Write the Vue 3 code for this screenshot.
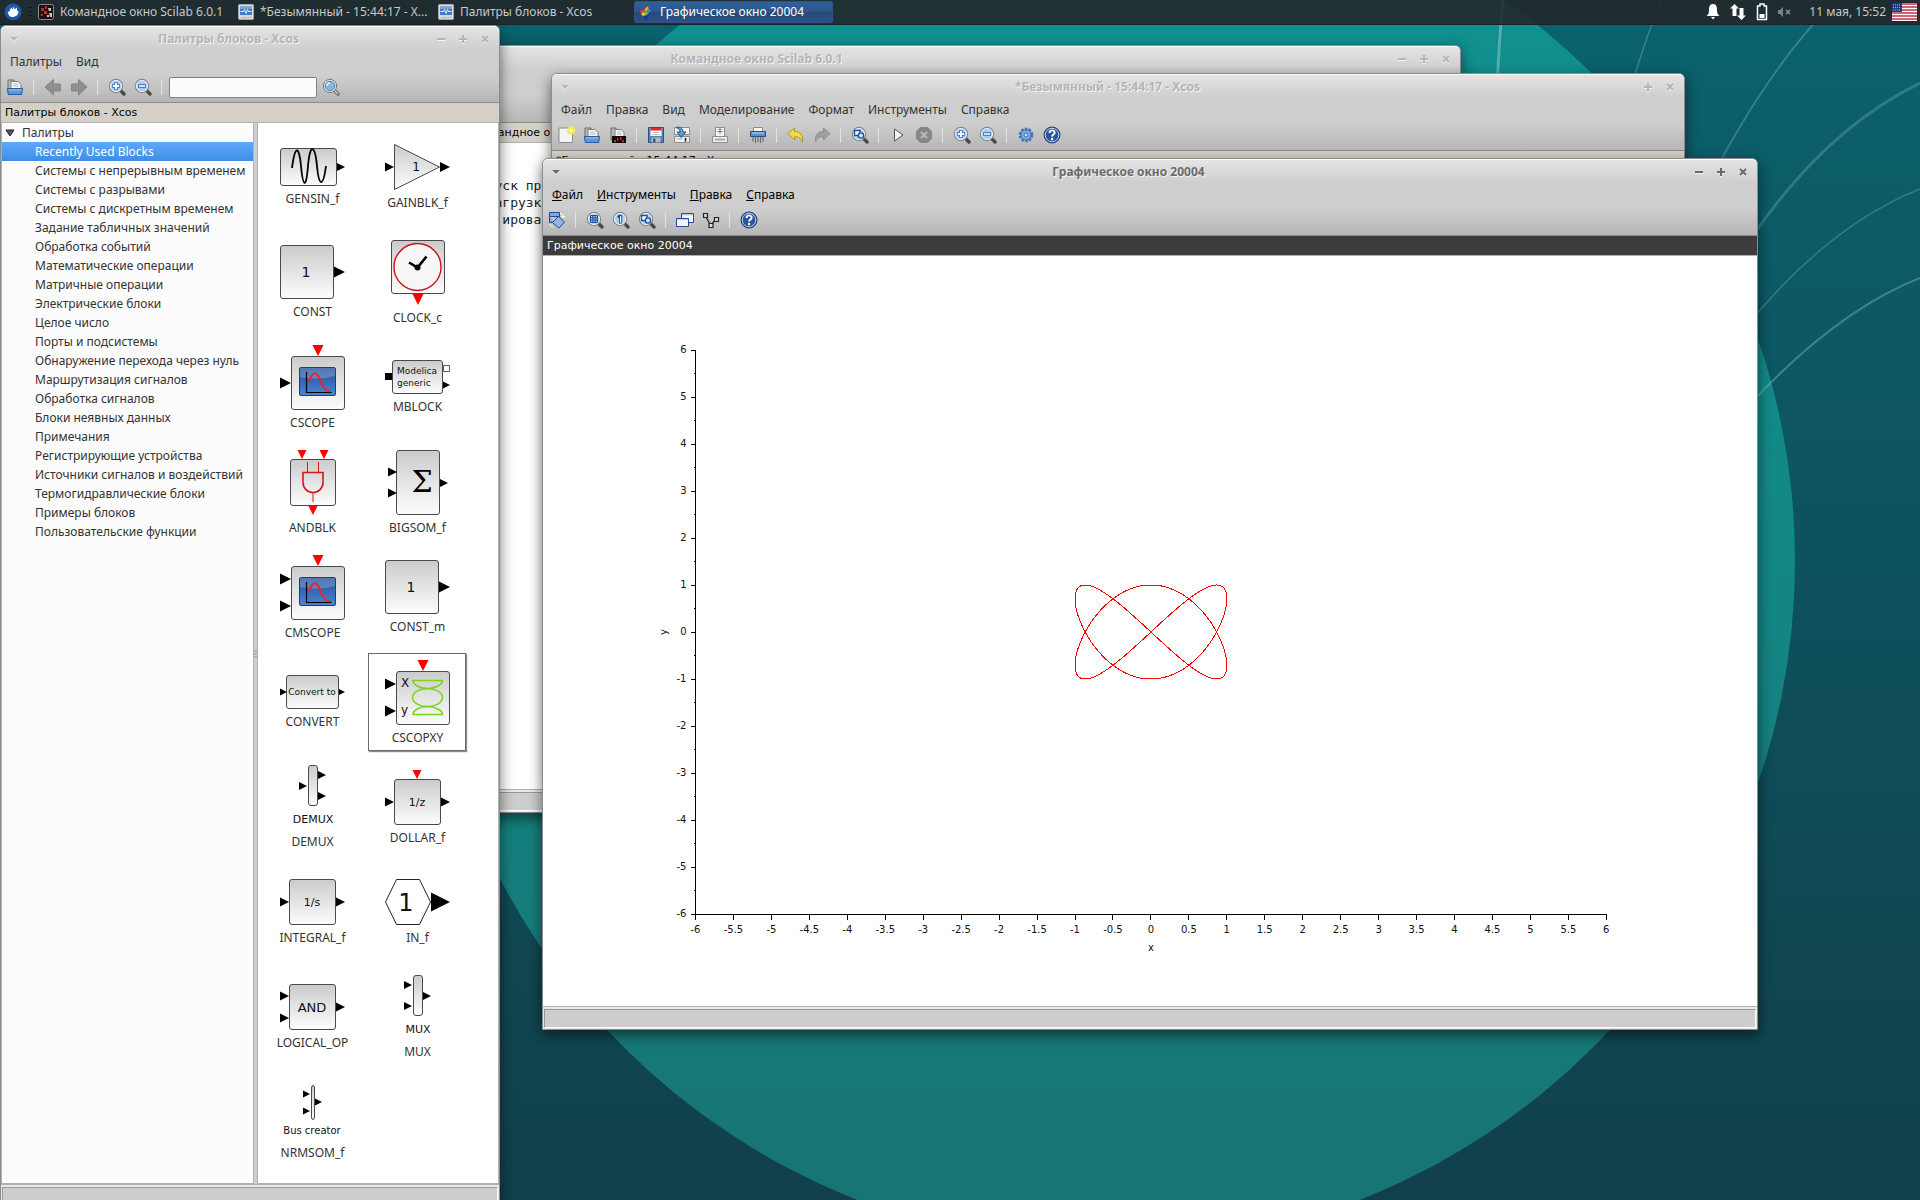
<script setup>
const tasks = [
  { icon: 'scilab', label: 'Командное окно Scilab 6.0.1' },
  { icon: 'xcos', label: '*Безымянный - 15:44:17 - X...' },
  { icon: 'xcos', label: 'Палитры блоков - Xcos' },
  { icon: 'surface', label: 'Графическое окно 20004', active: true },
]

const treeItems = [
  'Recently Used Blocks',
  'Системы с непрерывным временем',
  'Системы с разрывами',
  'Системы с дискретным временем',
  'Задание табличных значений',
  'Обработка событий',
  'Математические операции',
  'Матричные операции',
  'Электрические блоки',
  'Целое число',
  'Порты и подсистемы',
  'Обнаружение перехода через нуль',
  'Маршрутизация сигналов',
  'Обработка сигналов',
  'Блоки неявных данных',
  'Примечания',
  'Регистрирующие устройства',
  'Источники сигналов и воздействий',
  'Термогидравлические блоки',
  'Примеры блоков',
  'Пользовательские функции',
]

const paletteTools = ['open', '|', 'back', 'forward', '|', 'zoomin', 'zoomout', '|']
const xcosTools = [
  'new', 'open', 'openscilab', '|', 'save', 'saveas', '|', 'export', '|', 'shred', '|',
  'undo', 'redo', '|', 'fit', '|', 'play', 'stop', '|', 'zoomin', 'zoomout', '|', 'gear', 'help',
]
const graphTools = ['rotate', '|', 'zoomarea', 'zoomone', 'fit', '|', 'copy', 'datatip', '|', 'help']

const toolNames = {
  open: 'Открыть', back: 'Назад', forward: 'Вперёд', zoomin: 'Увеличить', zoomout: 'Уменьшить',
  new: 'Новая диаграмма', openscilab: 'Открыть в Scilab', save: 'Сохранить', saveas: 'Сохранить как',
  export: 'Экспорт', shred: 'Удалить', undo: 'Отменить', redo: 'Вернуть', fit: 'По размеру',
  play: 'Запустить', stop: 'Остановить', gear: 'Настройки', help: 'Справка', rotate: 'Вращение',
  zoomarea: 'Увеличить область', zoomone: 'Исходный масштаб', copy: 'Окна', datatip: 'Метки данных',
}

const xcosMenu = ['Файл', 'Правка', 'Вид', 'Моделирование', 'Формат', 'Инструменты', 'Справка']
const graphMenu = ['Файл', 'Инструменты', 'Правка', 'Справка']

// box: [x, y, width, height]; black and red: port triangles [x, y, size], y is the centre of the
// port for black ones and the top for red ones (x is then the centre)
const blocks = [
  { name: 'GENSIN_f', w: 65, h: 38, box: [0, 0, 57, 38], black: [[57, 19, 8]] },
  { name: 'GAINBLK_f', w: 65, h: 46, black: [[0, 23, 9], [55, 23, 10]], text: ['1', 31, 27, 12] },
  { name: 'CONST', w: 65, h: 54, box: [0, 0, 54, 54], black: [[54, 27, 11]], text: ['1', 26, 32, 14] },
  { name: 'CLOCK_c', w: 54, h: 65, box: [0, 0, 54, 54], red: [[27, 54, 11]] },
  { name: 'CSCOPE', w: 65, h: 65, box: [11, 11, 54, 54], black: [[0, 38, 11]], red: [[38, 0, 11]], scope: true },
  { name: 'MBLOCK', w: 65, h: 34, box: [7, 0, 51, 34], black: [[58, 25, 7]] },
  { name: 'ANDBLK', w: 46, h: 65, box: [0, 9, 46, 47], red: [[12, 0, 9], [34, 0, 9], [23, 56, 9]] },
  { name: 'BIGSOM_f', w: 60, h: 65, box: [8, 0, 44, 65], black: [[0, 22, 9], [0, 43, 9], [52, 33, 8]] },
  { name: 'CMSCOPE', w: 65, h: 65, box: [11, 11, 54, 54], black: [[0, 24, 11], [0, 51, 11]], red: [[38, 0, 11]], scope: true },
  { name: 'CONST_m', w: 65, h: 54, box: [0, 0, 54, 54], black: [[54, 27, 11]], text: ['1', 26, 32, 14] },
  { name: 'CONVERT', w: 65, h: 34, box: [6, 0, 53, 34], black: [[0, 17, 7], [59, 17, 6]], text: ['Convert to', 32, 20, 9] },
  { name: 'CSCOPXY', w: 65, h: 65, box: [11, 11, 54, 54], black: [[0, 24, 11], [0, 51, 11]], red: [[38, 0, 11]], current: true },
  { name: 'DEMUX', w: 65, h: 64, box: [28, 0, 10, 41], black: [[19, 21, 8], [38, 10, 8], [38, 31, 8]], text: ['DEMUX', 33, 58, 11] },
  { name: 'DOLLAR_f', w: 65, h: 55, box: [9, 9, 47, 46], black: [[0, 32, 9], [56, 32, 9]], red: [[32, 0, 9]], text: ['1/z', 32, 36, 11] },
  { name: 'INTEGRAL_f', w: 65, h: 46, box: [9, 0, 47, 46], black: [[0, 23, 9], [56, 23, 9]], text: ['1/s', 32, 27, 11] },
  { name: 'IN_f', w: 65, h: 46, black: [[46, 23, 19]], text: ['1', 21, 32, 24] },
  { name: 'LOGICAL_OP', w: 65, h: 46, box: [9, 0, 47, 46], black: [[0, 12, 9], [0, 34, 9], [56, 23, 9]], text: ['AND', 32, 28, 13] },
  { name: 'MUX', w: 65, h: 64, box: [28, 0, 10, 41], black: [[19, 10, 8], [19, 31, 8], [38, 21, 8]], text: ['MUX', 33, 58, 11] },
  { name: 'NRMSOM_f', w: 65, h: 55, box: [31, 0, 4, 35], black: [[23, 9, 7], [23, 26, 7], [35, 17, 7]], text: ['Bus creator', 32, 49, 10] },
]

const rightPort = ([x, y, s]) => `M${x} ${y - s / 2}l${s} ${s / 2}l${-s} ${s / 2}z`
const downPort = ([x, y, s]) => `M${x - s / 2} ${y}h${s}l${-s / 2} ${s}z`

// plot geometry inside the 1214 x 750 canvas
const x0 = 152.5
const y0 = 658
const stepX = 75.9
const stepY = 47
const px = (v) => x0 + (v + 6) * stepX
const py = (v) => y0 - (v + 6) * stepY
const halves = Array.from({ length: 25 }, (_, i) => -6 + i / 2)
const units = halves.filter((v) => Number.isInteger(v))
const curve = Array.from({ length: 361 }, (_, i) => {
  const t = (i * Math.PI) / 180
  return `${px(Math.sin(2 * t)).toFixed(1)},${py(Math.sin(3 * t)).toFixed(1)}`
}).join(' ')
</script>

<template>
  <div class="screen">
    <svg class="defs" aria-hidden="true">
      <defs>
        <linearGradient id="g-box" x1="0" y1="0" x2="0" y2="1">
          <stop offset="0" stop-color="#cbcbcb" /><stop offset="1" stop-color="#fdfdfd" />
        </linearGradient>
        <linearGradient id="g-scope" x1="0" y1="0" x2="0" y2="1">
          <stop offset="0" stop-color="#23509a" /><stop offset="1" stop-color="#4a84d4" />
        </linearGradient>
        <symbol id="lens" viewBox="0 0 18 18">
          <path d="M12 12l4 4" stroke="#4a4a4a" stroke-width="3.4" stroke-linecap="round" />
          <circle cx="8" cy="8" r="6.6" fill="#a9cdf2" stroke="#858585" stroke-width="1.2" />
          <circle cx="8" cy="8" r="5.5" fill="none" stroke="#eef5fc" stroke-width="1" />
        </symbol>
        <symbol id="i-search" viewBox="0 0 18 18">
          <path d="M12 12l4 4" stroke="#6a6a6a" stroke-width="3.4" stroke-linecap="round" />
          <path d="M12.500 12.500l3.500 3.500" stroke="#c8c8c8" stroke-width="1.400" />
          <circle cx="8" cy="8" r="6.600" fill="#e8e8e8" stroke="#757575" />
          <circle cx="8" cy="8" r="4.700" fill="#8bb5e6" stroke="#4e7fbf" />
          <path d="M5 8a3 3 0 0 1 3-3" stroke="#e5f0fb" stroke-width="1.500" fill="none" />
        </symbol>
        <symbol id="i-zoomin" viewBox="0 0 18 18">
          <use href="#lens" /><path d="M8 4v8M4 8h8" stroke="#2f6fbd" stroke-width="3.600" /><path d="M8 4.800v6.400M4.800 8h6.400" stroke="#fff" stroke-width="2" />
        </symbol>
        <symbol id="i-zoomout" viewBox="0 0 18 18">
          <use href="#lens" /><path d="M4 8h8" stroke="#2f6fbd" stroke-width="3.600" /><path d="M4.800 8h6.400" stroke="#fff" stroke-width="1.600" />
        </symbol>
        <symbol id="i-zoomarea" viewBox="0 0 18 18">
          <use href="#lens" /><path d="M4.500 4.500h7v7h-7zM6.800 4.500v7M9.200 4.500v7M4.500 6.800h7M4.500 9.200h7" stroke="#1d4f9e" fill="none" />
        </symbol>
        <symbol id="i-zoomone" viewBox="0 0 18 18">
          <use href="#lens" /><path d="M8.600 4v8.500M5.800 6.200l2.800-1.600" stroke="#1d4f9e" stroke-width="3" /><path d="M8.600 5.200v6.500" stroke="#fff" stroke-width="1.200" />
        </symbol>
        <symbol id="i-fit" viewBox="0 0 18 18">
          <use href="#lens" /><path d="M3.500 4.500h5.500v5h-5.500z" fill="#fff" stroke="#1d4f9e" stroke-width="1.400" /><circle cx="10" cy="9.500" r="2.600" fill="#dceafa" stroke="#1d4f9e" stroke-width="1.400" />
        </symbol>
        <symbol id="i-open" viewBox="0 0 18 18">
          <path d="M2 2h6v2h3v10H2z" fill="#b9b9b9" stroke="#6d6d6d" />
          <path d="M5 3.500h7l3 3V12H5z" fill="#fafafa" stroke="#7c7c7c" />
          <path d="M7 6h5M7 8h6" stroke="#b5b5b5" />
          <path d="M1.500 10.500h15l-.8 6H2.300z" fill="#5b97dc" stroke="#2a5c9f" /><path d="M2.500 12h13" stroke="#a5c8ee" />
        </symbol>
        <symbol id="i-openscilab" viewBox="0 0 18 18">
          <path d="M2 2h5v2h3v10H2z" fill="#b9b9b9" stroke="#6d6d6d" />
          <path d="M6 3.500h6l3 3V12H6z" fill="#fafafa" stroke="#7c7c7c" />
          <path d="M8 6h4M8 8h5" stroke="#b5b5b5" />
          <path d="M3 10h14v7H3z" fill="#0b0b0b" />
          <path d="M5 14h2v2H5zM8 12h1.500v3H8zM11 11h1.500v3H11zM13 14h2v2h-2z" fill="#d82222" />
        </symbol>
        <symbol id="i-new" viewBox="0 0 18 18">
          <path d="M2 2h13.500v14.500H2z" fill="#f4f4f4" stroke="#8a8a8a" /><circle cx="14" cy="4.500" r="4" fill="#f4e850" /><circle cx="14" cy="4.500" r="1.800" fill="#ffffb8" />
        </symbol>
        <symbol id="i-save" viewBox="0 0 18 18">
          <path d="M1.500 1.500h15v15h-15z" fill="#5583b8" stroke="#2d5282" /><path d="M3.500 2h11v8h-11z" fill="#fdfdfd" /><path d="M3.500 2h11v2.500h-11z" fill="#de2a1d" />
          <path d="M5 6.500h8M5 8.500h8" stroke="#c4c4c4" /><path d="M4.500 11.500h9v5h-9z" fill="#b8b8b8" /><path d="M6 12.500h2.500v4H6z" fill="#44597a" />
        </symbol>
        <symbol id="i-saveas" viewBox="0 0 18 18">
          <path d="M1.500 1.500h15v7h-15z" fill="#f4f4f4" stroke="#8c8c8c" /><path d="M1.500 10.500h15v6h-15z" fill="#f0f0f0" stroke="#8c8c8c" /><path d="M3.500 13h6" stroke="#aaa" /><path d="M12.500 12v3.500" stroke="#111" stroke-width="1.500" />
          <path d="M3 1.500c5-1 7 1 7 4.500h3l-4.800 5.500L4 6h3c0-2-1-3.500-4-4.500z" fill="#5f9cc9" stroke="#255c8d" />
        </symbol>
        <symbol id="i-export" viewBox="0 0 18 18">
          <path d="M4.500 1.500h9v9h-9z" fill="#f6f6f6" stroke="#909090" /><path d="M9 3v5M6.500 5.500h5M7.500 4l1.500-1.500L10.500 4" stroke="#777" fill="none" />
          <path d="M1.500 10.500h15v6h-15z" fill="#ececec" stroke="#909090" /><path d="M4 13.500h10" stroke="#9a9a9a" stroke-width="1.500" />
        </symbol>
        <symbol id="i-shred" viewBox="0 0 18 18">
          <path d="M4.500 1.500h9v5h-9z" fill="#f6f6f6" stroke="#8c8c8c" /><path d="M1.500 5.500h15v5h-15z" fill="#5b8fce" stroke="#26507f" /><path d="M3 7h12" stroke="#bcd5f0" />
          <path d="M4 11v4.500M6.500 11v6M9 11v5M11.500 11v6M14 11v4.500" stroke="#6e6e6e" stroke-width="1.200" />
        </symbol>
        <symbol id="i-undo" viewBox="0 0 18 18">
          <path d="M1 7.500L7.500 2v3.500c5 0 9 3 8 10.500-1.500-4-4-5.500-8-5.200V14z" fill="#f2dc45" stroke="#b09616" />
        </symbol>
        <symbol id="i-redo" viewBox="0 0 18 18">
          <path d="M17 7.500L10.500 2v3.500c-5 0-9 3-8 10.500 1.500-4 4-5.500 8-5.200V14z" fill="#9f9f9f" stroke="#8e8e8e" />
        </symbol>
        <symbol id="i-back" viewBox="0 0 18 18">
          <path d="M1 9l8.500-7.500v4.500H16.500v7H9.500v4z" fill="#8f8f8f" stroke="#838383" />
        </symbol>
        <symbol id="i-forward" viewBox="0 0 18 18">
          <path d="M17 9L8.500 1.500v4.500H1.500v7h7v4z" fill="#8f8f8f" stroke="#838383" />
        </symbol>
        <symbol id="i-play" viewBox="0 0 18 18">
          <path d="M5.500 3v12l8.500-6z" fill="#f4f4f4" stroke="#555" />
        </symbol>
        <symbol id="i-stop" viewBox="0 0 18 18">
          <path d="M5.500 1h7L17 5.500v7L12.500 17h-7L1 12.500v-7z" fill="#868686" /><path d="M6 6l6 6M12 6l-6 6" stroke="#b8b8b8" stroke-width="2.200" />
        </symbol>
        <symbol id="i-gear" viewBox="0 0 18 18">
          <circle cx="9" cy="9" r="6" fill="none" stroke="#3d6fb4" stroke-width="2.600" stroke-dasharray="2.500 1.270" />
          <circle cx="9" cy="9" r="5" fill="#7fabe3" stroke="#3d6fb4" /><circle cx="9" cy="9" r="2" fill="#d7dfe9" stroke="#3d6fb4" />
        </symbol>
        <symbol id="i-help" viewBox="0 0 18 18">
          <circle cx="9" cy="9" r="8" fill="#2c569b" stroke="#1b3b75" /><circle cx="9" cy="9" r="6.800" fill="none" stroke="#c3d3ea" />
          <path d="M6.500 7c0-3.600 5.200-3.300 5.200-.5 0 2-2.600 2-2.600 4" stroke="#fff" stroke-width="1.900" fill="none" /><circle cx="9.100" cy="13" r="1.200" fill="#fff" />
        </symbol>
        <symbol id="i-rotate" viewBox="0 0 18 18">
          <path d="M1.500 1.500h10v4h-10zM1.500 5.500v6h5" fill="#7da9dd" stroke="#1e4c8f" /><path d="M10.500 5.500l6 5.500-5.500 6-6.500-5.500z" fill="#90b7e6" stroke="#1e4c8f" />
          <path d="M12 2.500c2 0 3.500 1.500 3.500 4M13.800 5l1.700 2 1.500-2M2 13c.5 2 1.500 3 3.500 3" stroke="#fff" fill="none" />
        </symbol>
        <symbol id="i-copy" viewBox="0 0 18 18">
          <path d="M5.500 2.500h12v9h-12z" fill="#f6f8fb" stroke="#1f4f94" /><path d="M6 3h11v1.500H6z" fill="#b9d0ed" />
          <path d="M.500 7.500h12v8H.500z" fill="#f6f6f6" stroke="#1f4f94" /><path d="M1 8h11v1H1z" fill="#b9d0ed" />
        </symbol>
        <symbol id="i-datatip" viewBox="0 0 18 18">
          <path d="M4 6l4.500 8L14 8.500" stroke="#222" fill="none" stroke-width="1.300" />
          <path d="M1.500 2.500h4v4h-4zM12.500 6.500h4v4h-4zM7 12.500h4v4H7z" fill="#d8d8d8" stroke="#222" stroke-width="1.200" />
        </symbol>
        <symbol id="i-scilab" viewBox="0 0 16 16">
          <rect x=".5" y=".5" width="15" height="15" rx="2" fill="#1c1010" stroke="#8e8e8e" />
          <path d="M3 4h3v3H3zM7 2h2v3H7zM6 7h3v3H6zM3 10h2v2H3z" fill="#c92727" /><path d="M10 4h3v3h-2zM11 9h3v4h-2zM9 11h2v2H9z" fill="#dcbcbc" />
        </symbol>
        <symbol id="i-xcos" viewBox="0 0 16 16">
          <rect x=".5" y=".5" width="15" height="15" rx="1" fill="#dcdcdc" stroke="#a9a9a9" /><path d="M2 2h12v9H2z" fill="#4379c6" /><path d="M2 2h12v3H2z" fill="#7da5dc" />
          <path d="M2.500 7.500h3l1-2 1.500 4 1.500-4 1 2h3" stroke="#eaf6d8" fill="none" /><path d="M3 13.500h10" stroke="#bdbdbd" />
        </symbol>
        <symbol id="i-surface" viewBox="0 0 16 16">
          <path d="M7 1l2 1v3l-2 1z" fill="#b01810" /><path d="M2 7l5-2v4l-4 1z" fill="#e8431d" /><path d="M7 4l3-2 1 4-4 2z" fill="#f59a1d" /><path d="M10 5l3 1-1 3-3 1z" fill="#2a8fd8" />
          <path d="M3 10l4-2 2 2-4 2z" fill="#eadb2d" /><path d="M6 8l4 0-1 3-2 1z" fill="#63c04c" /><path d="M6 13l3-2 1 3-2 2z" fill="#1c2bb8" /><path d="M11 8l3 0-2 3z" fill="#1c3bc8" />
        </symbol>
      </defs>
    </svg>

    <svg class="wallpaper" viewBox="0 0 1920 1200" preserveAspectRatio="xMidYMid slice" aria-hidden="true">
      <defs>
        <linearGradient id="g-bg" x1="0" y1="0" x2="0" y2="1">
          <stop offset="0" stop-color="#0a626d" /><stop offset="0.400" stop-color="#0d5460" /><stop offset="0.850" stop-color="#10454f" /><stop offset="1" stop-color="#11404b" />
        </linearGradient>
        <linearGradient id="g-disc" x1="0" y1="0" x2="0" y2="1">
          <stop offset="0" stop-color="#0f9291" /><stop offset="0.500" stop-color="#138784" /><stop offset="1" stop-color="#177372" />
        </linearGradient>
      </defs>
      <rect width="1920" height="1200" fill="url(#g-bg)" />
      <circle cx="1108.500" cy="561" r="686.500" fill="url(#g-disc)" />
      <g fill="none" stroke="#a9d0d0">
        <path d="M1503 0Q1499 40 1497 90" stroke-width="3" opacity="0.450" />
        <path d="M1662 0Q1648 30 1632 85" stroke-width="1.500" opacity="0.300" />
        <path d="M1700 200Q1765 70 1836 0" stroke-width="2" opacity="0.280" />
        <path d="M1750 240Q1824 130 1920 83" stroke-width="3" opacity="0.250" />
        <path d="M1750 322Q1830 225 1920 189" stroke-width="1.500" opacity="0.280" />
        <path d="M1750 404Q1838 310 1920 278" stroke-width="2" opacity="0.350" />
      </g>
    </svg>

    <header class="panel">
      <button class="start" aria-label="Меню приложений">
        <svg width="18" height="18" viewBox="0 0 18 18"><circle cx="9" cy="9" r="8.500" fill="#1d57ad" /><path d="M3.500 9c2 0 2-1 3-3l.5-2 1.500 2.500L10 3.500l.8 3L13 4.500v3l1.500 1c0 3-2.500 5.500-6 5.500-3 0-4-2-5-5z" fill="#fff" /></svg>
      </button>
      <span class="grip"></span>
      <nav class="tasks">
        <button v-for="t in tasks" :key="t.label" class="task" :class="{ active: t.active }">
          <svg width="16" height="16"><use :href="'#i-' + t.icon" /></svg>{{ t.label }}
        </button>
      </nav>
      <div class="tray">
        <svg width="14" height="18" viewBox="0 0 14 18"><path d="M7 1c3.500 0 4 3 4 6 0 3 .5 4 2.500 6H.500C2.500 11 3 10 3 7c0-3 .5-6 4-6zM5 14h4l-2 2.500z" fill="#fff" /></svg>
        <svg width="18" height="18" viewBox="0 0 18 18"><path d="M5.500 1L10 5.500H7.500V13H3.500V5.500H1zM12.500 17L8 12.500h2.500V5h4v7.500H17z" fill="#fff" /></svg>
        <svg width="12" height="18" viewBox="0 0 12 18"><path d="M4 1h4v2h2.500v13.500h-9V3H4z" fill="none" stroke="#fff" stroke-width="1.500" /><path d="M3.500 11h5v4h-5z" fill="#fff" /></svg>
        <svg width="14" height="18" viewBox="0 0 14 18"><path d="M1 7h2l3-3v10l-3-3H1z" fill="#7c8486" /><path d="M9 7l4 4M13 7l-4 4" stroke="#8a9193" stroke-width="1.500" /></svg>
      </div>
      <time class="clock">11 мая, 15:52</time>
      <svg class="flag" width="25" height="18" viewBox="0 0 25 18">
        <path d="M0 0h25v18H0z" fill="#fff" /><path d="M0 1h25M0 4h25M0 7h25M0 10h25M0 13h25M0 16h25" stroke="#c5304a" stroke-width="1.600" />
        <path d="M0 0h10v9H0z" fill="#263b77" /><path d="M1 2h8M1 4.500h8M1 7h8" stroke="#a7b1d0" stroke-dasharray="1 1" />
      </svg>
    </header>

    <main class="desktop">
      <section class="window scilab inactive">
        <div class="head">
          <div class="titlebar">
            <button class="wbtn menu-btn" aria-label="Меню окна"><svg width="10" height="6"><path d="M1 1h8l-4 4z" fill="currentColor" /></svg></button>
            <h2>Командное окно Scilab 6.0.1</h2>
            <button class="wbtn" aria-label="Свернуть"><svg width="8" height="8"><path d="M0 4h8" stroke="currentColor" stroke-width="2" /></svg></button>
            <button class="wbtn" aria-label="Развернуть"><svg width="8" height="8"><path d="M0 4h8M4 0v8" stroke="currentColor" stroke-width="2" /></svg></button>
            <button class="wbtn" aria-label="Закрыть"><svg width="8" height="8"><path d="M1 1l6 6M7 1l-6 6" stroke="currentColor" stroke-width="2" /></svg></button>
          </div>
        </div>
        <div class="dock">
          <div class="infobar">Командное о</div>
          <pre class="console">Запуск пр
  Загрузк
    ирова</pre>
        </div>
        <div class="status"><div></div></div>
      </section>

      <section class="window xcos inactive">
        <div class="head">
          <div class="titlebar">
            <button class="wbtn menu-btn" aria-label="Меню окна"><svg width="10" height="6"><path d="M1 1h8l-4 4z" fill="currentColor" /></svg></button>
            <h2>*Безымянный - 15:44:17 - Xcos</h2>
            <button class="wbtn" aria-label="Развернуть"><svg width="8" height="8"><path d="M0 4h8M4 0v8" stroke="currentColor" stroke-width="2" /></svg></button>
            <button class="wbtn" aria-label="Закрыть"><svg width="8" height="8"><path d="M1 1l6 6M7 1l-6 6" stroke="currentColor" stroke-width="2" /></svg></button>
          </div>
          <nav class="menubar"><button v-for="m in xcosMenu" :key="m">{{ m }}</button></nav>
          <div class="toolbar">
            <template v-for="(t, i) in xcosTools" :key="i">
              <span v-if="t === '|'" class="sep"></span>
              <button v-else class="tool" :aria-label="toolNames[t]"><svg width="18" height="18"><use :href="'#i-' + t" /></svg></button>
            </template>
          </div>
        </div>
        <div class="infobar">*Безымянный - 15:44:17 - Xcos</div>
      </section>

      <section class="window palettes inactive">
        <div class="head">
          <div class="titlebar">
            <button class="wbtn menu-btn" aria-label="Меню окна"><svg width="10" height="6"><path d="M1 1h8l-4 4z" fill="currentColor" /></svg></button>
            <h2>Палитры блоков - Xcos</h2>
            <button class="wbtn" aria-label="Свернуть"><svg width="8" height="8"><path d="M0 4h8" stroke="currentColor" stroke-width="2" /></svg></button>
            <button class="wbtn" aria-label="Развернуть"><svg width="8" height="8"><path d="M0 4h8M4 0v8" stroke="currentColor" stroke-width="2" /></svg></button>
            <button class="wbtn" aria-label="Закрыть"><svg width="8" height="8"><path d="M1 1l6 6M7 1l-6 6" stroke="currentColor" stroke-width="2" /></svg></button>
          </div>
          <nav class="menubar"><button>Палитры</button><button>Вид</button></nav>
          <div class="toolbar">
            <template v-for="(t, i) in paletteTools" :key="i">
              <span v-if="t === '|'" class="sep"></span>
              <button v-else class="tool" :aria-label="toolNames[t]"><svg width="18" height="18"><use :href="'#i-' + t" /></svg></button>
            </template>
            <input class="search" type="text" aria-label="Поиск блока" />
            <button class="tool" aria-label="Найти"><svg width="18" height="18"><use href="#i-search" /></svg></button>
          </div>
        </div>
        <div class="infobar">Палитры блоков - Xcos</div>
        <div class="split">
          <div class="tree">
            <div class="root"><svg width="10" height="8"><path d="M1 1h8L5 7z" fill="#555" stroke="#222" /></svg>Палитры</div>
            <ul>
              <li v-for="(item, i) in treeItems" :key="item" :class="{ selected: i === 0 }">{{ item }}</li>
            </ul>
          </div>
          <div class="divider"><svg width="3" height="8"><path d="M0 1h4M0 4h4M0 7h4" stroke="#999" /></svg></div>
          <div class="blocks">
            <button v-for="b in blocks" :key="b.name" class="block" :class="{ current: b.current }">
              <svg :width="b.w" :height="b.h" overflow="visible">
                <rect v-if="b.box" :x="b.box[0] + 0.5" :y="b.box[1] + 0.5" :width="b.box[2] - 1" :height="b.box[3] - 1" rx="2.500" fill="url(#g-box)" stroke="#4a4a4a" />
                <path v-for="(p, i) in b.black" :key="'b' + i" :d="rightPort(p)" fill="#000" />
                <path v-for="(p, i) in b.red" :key="'r' + i" :d="downPort(p)" fill="#f00" />
                <path v-if="b.name === 'GENSIN_f'" d="M12 20C15-3 19-3 21 18S26 42 28 18S35-3 37 18S43 40 46 18" fill="none" stroke="#000" stroke-width="1.800" />
                <path v-if="b.name === 'GAINBLK_f'" d="M9.500.500L54.500 23L9.500 45.500z" fill="url(#g-box)" stroke="#4a4a4a" />
                <path v-if="b.name === 'IN_f'" d="M.500 23L11.500.500h23L45.500 23l-11 22.500h-23z" fill="#fff" stroke="#222" />
                <g v-if="b.name === 'CLOCK_c'">
                  <circle cx="26.500" cy="27" r="23.500" fill="#f6f6f6" stroke="#c8141b" stroke-width="1.400" />
                  <path d="M18 22.500l8.500 5 9-11" fill="none" stroke="#000" stroke-width="2.600" /><circle cx="26.500" cy="27.500" r="3" />
                </g>
                <g v-if="b.scope">
                  <rect x="19.500" y="22.500" width="36" height="28" rx="1.500" fill="url(#g-scope)" stroke="#1c3f78" />
                  <path d="M20 23h35v8q-17 5-35 1z" fill="#fff" opacity="0.220" />
                  <path d="M26.500 27v20.500h25" fill="none" stroke="#000" stroke-width="1.200" />
                  <path d="M29 37c3-11 8-11 11-2s6 12 10 11" fill="none" stroke="#f2222b" stroke-width="2" />
                </g>
                <g v-if="b.name === 'MBLOCK'">
                  <path d="M0 13h7v7H0z" /><path d="M58.500 5.500h6v6h-6z" fill="#fff" stroke="#333" stroke-width="0.800" />
                  <text x="12" y="14" font-size="9">Modelica</text><text x="12" y="26" font-size="9">generic</text>
                </g>
                <g v-if="b.name === 'ANDBLK'" fill="none" stroke="#d01b1b">
                  <path d="M17.500 12v10M28.500 12v10M23 43v9" /><path d="M13 22.500h20v10a10 10 0 0 1-20 0z" stroke-width="1.600" />
                </g>
                <text v-if="b.name === 'BIGSOM_f'" class="sigma" x="34" y="42" font-size="30" text-anchor="middle">Σ</text>
                <g v-if="b.name === 'CSCOPXY'">
                  <text x="16" y="27" font-size="12">X</text><text x="16" y="54" font-size="12">y</text>
                  <g fill="none" stroke="#7dd319" stroke-width="1.500">
                    <path d="M28 20.500h29.500c0 4-7 8-15 8s-14.500-4-14.500-8zM28 54.500h29.500c0-4-7-8-15-8s-14.500 4-14.500 8z" /><ellipse cx="42.500" cy="37.500" rx="15" ry="9" />
                  </g>
                </g>
                <text v-if="b.text" :x="b.text[1]" :y="b.text[2]" :font-size="b.text[3]" text-anchor="middle">{{ b.text[0] }}</text>
              </svg>
              <span>{{ b.name }}</span>
            </button>
          </div>
        </div>
        <div class="status"><div></div></div>
      </section>

      <section class="window graph">
        <div class="head">
          <div class="titlebar">
            <button class="wbtn menu-btn" aria-label="Меню окна"><svg width="10" height="6"><path d="M1 1h8l-4 4z" fill="currentColor" /></svg></button>
            <h2>Графическое окно 20004</h2>
            <button class="wbtn" aria-label="Свернуть"><svg width="8" height="8"><path d="M0 4h8" stroke="currentColor" stroke-width="2" /></svg></button>
            <button class="wbtn" aria-label="Развернуть"><svg width="8" height="8"><path d="M0 4h8M4 0v8" stroke="currentColor" stroke-width="2" /></svg></button>
            <button class="wbtn" aria-label="Закрыть"><svg width="8" height="8"><path d="M1 1l6 6M7 1l-6 6" stroke="currentColor" stroke-width="2" /></svg></button>
          </div>
          <nav class="menubar"><button v-for="m in graphMenu" :key="m"><u>{{ m[0] }}</u>{{ m.slice(1) }}</button></nav>
          <div class="toolbar">
            <template v-for="(t, i) in graphTools" :key="i">
              <span v-if="t === '|'" class="sep"></span>
              <button v-else class="tool" :aria-label="toolNames[t]"><svg width="18" height="18"><use :href="'#i-' + t" /></svg></button>
            </template>
          </div>
        </div>
        <div class="infobar dark">Графическое окно 20004</div>
        <div class="canvas">
          <svg viewBox="0 0 1214 750" role="img" aria-label="График y от x">
            <g stroke="#000" fill="none" shape-rendering="crispEdges">
              <path :d="`M${x0} ${py(6)}V${y0}H${px(6)}`" />
              <path v-for="v in halves" :key="'x' + v" :d="`M${px(v)} ${y0}v6`" />
              <path v-for="v in halves" :key="'y' + v" :d="`M${x0} ${py(v)}h${Number.isInteger(v) ? -5 : -2}`" />
            </g>
            <g class="axis">
              <text v-for="v in halves" :key="'lx' + v" :x="px(v)" :y="y0 + 19" text-anchor="middle">{{ v }}</text>
              <text v-for="v in units" :key="'ly' + v" :x="x0 - 9" :y="py(v) + 3" text-anchor="end">{{ v }}</text>
              <text :x="px(0)" :y="y0 + 37" text-anchor="middle">x</text>
              <text :transform="`translate(${x0 - 29} ${py(0)}) rotate(-90)`" text-anchor="middle">y</text>
            </g>
            <polyline :points="curve" fill="none" stroke="#f00" shape-rendering="crispEdges" />
          </svg>
        </div>
        <div class="status"><div></div></div>
      </section>
    </main>
  </div>
</template>

<style>
body {
  margin: 0;
}
</style>

<style scoped>
.screen {
  position: relative;
  display: flex;
  flex-direction: column;
  height: 100vh;
  overflow: hidden;
  font-family: "Noto Sans", "Open Sans", sans-serif;
  font-size: 12px;
  color: #333;
}
button {
  margin: 0;
  padding: 0;
  border: 0;
  background: none;
  font: inherit;
  color: inherit;
}
.defs {
  position: absolute;
  width: 0;
  height: 0;
}
.wallpaper {
  position: absolute;
  inset: 0;
  width: 100%;
  height: 100%;
}
.panel {
  position: relative;
  display: flex;
  align-items: center;
  flex: none;
  height: 25px;
  box-sizing: border-box;
  padding-bottom: 1px;
  border-bottom: 1px solid #192225;
  background: rgba(35, 35, 38, 0.86);
  color: #c6cacb;
}
.start {
  display: flex;
  padding: 0 4px;
}
.grip {
  width: 4px;
  height: 9px;
  margin: 0 2px 0 2px;
  background: repeating-linear-gradient(#11181a 0 1px, transparent 1px 4px);
}
.tasks {
  display: flex;
  flex: 1;
  gap: 1px;
}
.task {
  display: flex;
  align-items: center;
  gap: 6px;
  width: 199px;
  height: 22px;
  padding: 0 3px;
  box-sizing: border-box;
  border: 1px solid transparent;
  border-radius: 2px;
  white-space: nowrap;
}
.task.active {
  border-color: #2d5488;
  background: linear-gradient(#30619b, #2c5688 49%, #274a77 51%, #2b5185);
  color: #fff;
}
.tray {
  display: flex;
  align-items: center;
  gap: 9px;
}
.clock {
  margin: 0 6px 0 18px;
}
.flag {
  margin-right: 3px;
}
.desktop {
  position: relative;
  flex: 1;
}
.window {
  position: absolute;
  display: flex;
  flex-direction: column;
  box-sizing: border-box;
  border: 1px solid #8c8c8c;
  border-radius: 6px 6px 0 0;
  background: #cecece;
  box-shadow: 0 5px 14px rgba(0, 0, 0, 0.55);
}
.scilab {
  left: 95px;
  top: 20px;
  width: 1366px;
  height: 768px;
}
.xcos {
  left: 551px;
  top: 48px;
  width: 1134px;
  height: 700px;
}
.palettes {
  left: 0;
  top: 0;
  bottom: -8px;
  width: 500px;
}
.graph {
  left: 542px;
  top: 133px;
  width: 1216px;
  color: #000;
}
.head {
  display: flex;
  flex-direction: column;
  flex: none;
  height: 77px;
  box-sizing: border-box;
  border-top: 1px solid #fff;
  border-bottom: 1px solid #8c8c8c;
  border-radius: 5px 5px 0 0;
  background: linear-gradient(#e4e4e4, #cecece 23px, #cecece 48px, #b6b6b6);
}
.titlebar {
  display: flex;
  align-items: center;
  height: 23px;
  padding-right: 3px;
  color: #6a6a6a;
}
.inactive .titlebar {
  color: #b5b5b5;
}
.titlebar h2 {
  flex: 1;
  margin: 0;
  font-size: 12px;
  line-height: 20px;
  text-align: center;
  text-shadow: 1px 1px 0 #f4f4f4;
}
.wbtn {
  display: flex;
  justify-content: center;
  width: 22px;
}
.wbtn svg {
  filter: drop-shadow(0 1px 0 #f4f4f4);
}
.menu-btn {
  width: 26px;
}
.menubar {
  display: flex;
  align-items: center;
  gap: 14px;
  height: 22px;
  padding-left: 9px;
}
.toolbar {
  display: flex;
  align-items: center;
  flex: 1;
  padding-left: 1px;
}
.tool {
  display: flex;
  align-items: center;
  justify-content: center;
  width: 26px;
  height: 26px;
}
.sep {
  width: 1px;
  height: 16px;
  margin: 0 6px 0 5px;
  background: #e2e2e2;
}
.search {
  width: 148px;
  height: 21px;
  box-sizing: border-box;
  margin: 0 1px;
  border: 1px solid #808080;
  border-radius: 2px;
  background: #fcfcfc;
}
.infobar {
  flex: none;
  height: 20px;
  box-sizing: border-box;
  padding-left: 4px;
  border-bottom: 1px solid #b0b0b0;
  background: #d4d0c8;
  color: #000;
  font-family: "DejaVu Sans", "Noto Sans", sans-serif;
  font-size: 11px;
  line-height: 19px;
  white-space: nowrap;
}
.infobar.dark {
  background: #3c3c3c;
  color: #fff;
}
.dock {
  display: flex;
  flex-direction: column;
  flex: 1;
  margin-left: 375px;
  background: #fff;
}
.console {
  margin: 34px 0 0;
  font-family: "DejaVu Sans Mono", monospace;
  font-size: 13px;
  line-height: 17px;
  color: #222;
}
.split {
  display: flex;
  flex: 1;
  min-height: 0;
}
.tree {
  width: 253px;
  box-sizing: border-box;
  flex: none;
  border: 1px solid #b0b0b0;
  border-top: 0;
  background: #fcfcfc;
}
.root {
  display: flex;
  align-items: center;
  gap: 7px;
  height: 19px;
  padding-left: 3px;
}
.tree ul {
  margin: 0;
  padding: 0;
  list-style: none;
}
.tree li {
  height: 19px;
  padding-left: 33px;
  line-height: 19px;
  white-space: nowrap;
}
.tree li.selected {
  background: linear-gradient(#5ea8fb, #3d8ee8);
  color: #fff;
}
.divider {
  display: flex;
  align-items: center;
  width: 3px;
  background: #cecece;
}
.blocks {
  display: grid;
  flex: 1;
  grid-template-columns: 98px 98px;
  grid-auto-rows: 98px;
  gap: 7px;
  padding: 5px;
  border: 1px solid #b0b0b0;
  border-top: 0;
  background: #fff;
}
.block {
  display: flex;
  flex-direction: column;
  align-items: center;
  justify-content: center;
  gap: 5px;
  padding: 1px 0 0 1px;
  line-height: 16px;
}
.block.current {
  box-shadow: inset 0 0 0 1px #6c6c6c, 1px 1px 1px #8c8c8c;
}
.block text {
  font-family: "DejaVu Sans", sans-serif;
  fill: #111;
}
.block .sigma {
  font-family: "DejaVu Serif", serif;
  fill: #000;
}
.canvas {
  display: flex;
  background: #fff;
}
.canvas svg {
  width: 100%;
}
.axis {
  font-family: "DejaVu Sans", sans-serif;
  font-size: 10px;
  fill: #111;
}
.status {
  flex: none;
  padding: 2px 1px 1px;
  border-top: 1px solid #b0b0b0;
  background: #e8e8e8;
}
.status div {
  height: 17px;
  border: 1px solid #999;
  border-right-color: #fff;
  border-bottom-color: #fff;
  background: #cdcdcd;
}
</style>
